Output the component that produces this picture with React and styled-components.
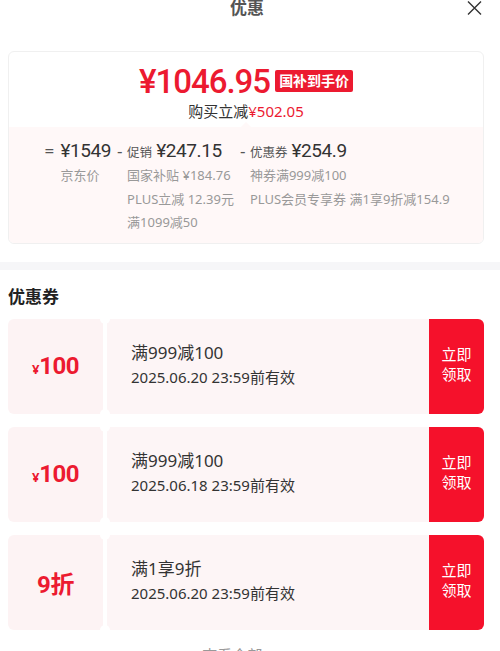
import React from 'react';
import styled, { createGlobalStyle } from 'styled-components';

const GlobalStyle = createGlobalStyle`
	html, body {
		margin: 0;
		padding: 0;
		background: #fff;
	}
	body {
		font-family: "Noto Sans", "Noto Sans CJK SC", sans-serif;
		color: #333;
	}
`;

const RED = '#ec1a30';

const Page = styled.div`
	width: 500px;
	height: 651px;
	overflow: hidden;
`;

const Header = styled.div`
	display: grid;
	grid-template-columns: 1fr auto 1fr;
	align-items: center;
	height: 16px;
`;

const Title = styled.div`
	grid-column: 2;
	font-size: 17px;
	line-height: 16px;
	font-weight: 700;
	color: #555;
	margin-left: -6px;
`;

const Close = styled.div`
	justify-self: end;
	display: flex;
	padding-right: 18px;
`;

const PriceCard = styled.div`
	margin: 35px 16px 0 8px;
	border: 1px solid #f0f0f0;
	border-radius: 6px;
	overflow: hidden;
`;

const PriceTop = styled.div`
	display: flex;
	flex-direction: column;
	align-items: center;
	padding: 10px 0 5px;
`;

const PriceLine = styled.div`
	display: flex;
	align-items: center;
	gap: 5px;
	height: 40px;
`;

const BigPrice = styled.span`
	font-family: Roboto, "Noto Sans", sans-serif;
	font-size: 33px;
	font-weight: 500;
	color: ${RED};
	letter-spacing: -1px;
	line-height: 40px;
`;

const Tag = styled.span`
	background: ${RED};
	color: #fff;
	font-size: 14px;
	font-weight: 700;
	line-height: 22px;
	padding: 0 4px;
	border-radius: 2px;
	margin-top: -3px;
`;

const Saving = styled.div`
	font-size: 15px;
	line-height: 22px;
	color: #333;
	margin-top: -2px;
`;

const Red = styled.span`
	color: ${RED};
`;

const PriceBottom = styled.div`
	position: relative;
	background: #fff8f8;
	display: flex;
	justify-content: center;
	gap: 6px;
	padding: 11px 0 8px 2px;

	&::before {
		content: '';
		position: absolute;
		top: -5px;
		left: 50%;
		margin-left: -5px;
		border: 5px solid transparent;
		border-top: 0;
		border-bottom-color: #fff8f8;
	}
`;

const Formula = styled.div`
	display: flex;
	align-items: flex-start;
`;

const Op = styled.span`
	font-size: 17px;
	line-height: 26px;
	color: #555;
	width: ${(p) => p.w}px;
`;

const Part = styled.div`
	display: flex;
	flex-direction: column;
`;

const PartHead = styled.div`
	display: flex;
	align-items: baseline;
	gap: 4px;
	height: 26px;
	line-height: 26px;
`;

const PartLabel = styled.span`
	font-size: 12.5px;
	color: #555;
`;

const PartValue = styled.span`
	font-family: Roboto, "Noto Sans", sans-serif;
	font-size: 19px;
	color: #333;
	letter-spacing: -0.4px;
`;

const Sub = styled.div`
	font-size: 13px;
	line-height: 23.5px;
	color: #999;
	white-space: nowrap;
`;

const Band = styled.div`
	height: 8px;
	background: #f6f6f8;
	margin-top: 18px;
`;

const SectionTitle = styled.div`
	font-size: 17px;
	font-weight: 700;
	color: #222;
	line-height: 24px;
	padding: 15px 0 0 8px;
`;

const CouponList = styled.div`
	display: flex;
	flex-direction: column;
	gap: 13px;
	margin: 10px 16px 0 8px;
`;

const Coupon = styled.div`
	display: flex;
	height: 95px;
	gap: 4px;
`;

const CouponValue = styled.div`
	position: relative;
	width: 95px;
	background: #fdf3f4;
	border-radius: 6px 0 0 6px;
	display: flex;
	align-items: center;
	justify-content: center;
	color: ${RED};
	font-weight: 700;

	&::before,
	&::after {
		content: '';
		position: absolute;
		right: -7px;
		width: 10px;
		height: 10px;
		border-radius: 50%;
		background: #fff;
		z-index: 1;
	}
	&::before {
		top: -5px;
	}
	&::after {
		bottom: -5px;
	}
`;

const Yen = styled.span`
	font-size: 13px;
	margin-top: 5px;
`;

const Amount = styled.span`
	font-family: Roboto, "Noto Sans", "Noto Sans CJK SC", sans-serif;
	font-size: 24px;
	letter-spacing: -0.5px;
`;

const CouponBody = styled.div`
	flex: 1;
	background: #fdf5f6;
	display: flex;
	flex-direction: column;
	justify-content: center;
	padding-left: 24px;
	padding-bottom: 2px;
`;

const Rule = styled.div`
	font-size: 17px;
	line-height: 25px;
	color: #333;
`;

const Expire = styled.div`
	font-size: 15px;
	line-height: 25px;
	color: #333;
`;

const Claim = styled.button`
	width: 55px;
	border: 0;
	background: #f5112b;
	color: #fff;
	font-family: inherit;
	font-size: 15px;
	line-height: 20px;
	border-radius: 0 6px 6px 0;
	padding: 0 0 4px;
	margin-left: -4px;
`;

const More = styled.div`
	text-align: center;
	font-size: 15px;
	color: #999;
	margin-top: 14px;
	padding-right: 18px;
`;

const coupons = [
	{ value: '100', yen: true, rule: '满999减100', expire: '2025.06.20 23:59前有效' },
	{ value: '100', yen: true, rule: '满999减100', expire: '2025.06.18 23:59前有效' },
	{ value: '9折', yen: false, rule: '满1享9折', expire: '2025.06.20 23:59前有效' },
];

const CloseIcon = () => (
	<svg width="15" height="15" viewBox="0 0 15 15" fill="none" stroke="#333" strokeWidth="1.4">
		<path d="M1 0.5 L14 13.5 M14 0.5 L1 13.5" />
	</svg>
);

export default function App() {
	return (
		<Page>
			<GlobalStyle />
			<Header>
				<Title>优惠</Title>
				<Close>
					<CloseIcon />
				</Close>
			</Header>

			<PriceCard>
				<PriceTop>
					<PriceLine>
						<BigPrice>¥1046.95</BigPrice>
						<Tag>国补到手价</Tag>
					</PriceLine>
					<Saving>
						购买立减<Red>¥502.05</Red>
					</Saving>
				</PriceTop>
				<PriceBottom>
					<Formula>
						<Op w={16}>=</Op>
						<Part>
							<PartHead>
								<PartValue>¥1549</PartValue>
							</PartHead>
							<Sub>京东价</Sub>
						</Part>
					</Formula>
					<Formula>
						<Op w={10}>-</Op>
						<Part>
							<PartHead>
								<PartLabel>促销</PartLabel>
								<PartValue>¥247.15</PartValue>
							</PartHead>
							<Sub>国家补贴 ¥184.76</Sub>
							<Sub>PLUS立减 12.39元</Sub>
							<Sub>满1099减50</Sub>
						</Part>
					</Formula>
					<Formula>
						<Op w={10}>-</Op>
						<Part>
							<PartHead>
								<PartLabel>优惠券</PartLabel>
								<PartValue>¥254.9</PartValue>
							</PartHead>
							<Sub>神券满999减100</Sub>
							<Sub>PLUS会员专享券 满1享9折减154.9</Sub>
						</Part>
					</Formula>
				</PriceBottom>
			</PriceCard>

			<Band />
			<SectionTitle>优惠券</SectionTitle>

			<CouponList>
				{coupons.map((c, i) => (
					<Coupon key={i}>
						<CouponValue>
							{c.yen && <Yen>¥</Yen>}
							<Amount>{c.value}</Amount>
						</CouponValue>
						<CouponBody>
							<Rule>{c.rule}</Rule>
							<Expire>{c.expire}</Expire>
						</CouponBody>
						<Claim>
							立即
							<br />
							领取
						</Claim>
					</Coupon>
				))}
			</CouponList>

			<More>查看全部(3)</More>
		</Page>
	);
}
